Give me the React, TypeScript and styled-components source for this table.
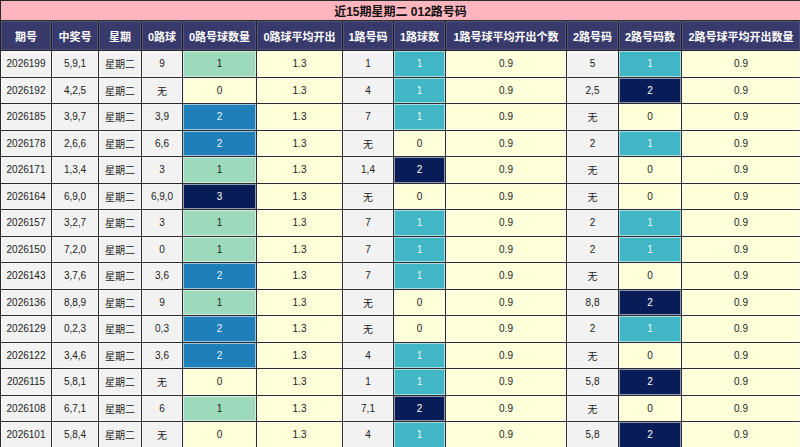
import React from "react";
import styled, { createGlobalStyle } from "styled-components";

const Global = createGlobalStyle`
  html, body { margin: 0; padding: 0; background: #ffffff; }
  body { font-family: "Liberation Sans", "Noto Sans CJK SC", Arial, sans-serif; }
`;

const Table = styled.table`
  width: 800px;
  border-collapse: collapse;
  table-layout: fixed;
  font-family: "Liberation Sans", "Noto Sans CJK SC", Arial, sans-serif;
`;

const TitleCell = styled.th`
  height: 20px;
  padding: 0;
  background: #ffb5bd;
  border: 1px solid #2b2b2b;
  color: #111;
  font-size: 12px;
  font-weight: bold;
  text-align: center;
  box-sizing: border-box;
`;

const HeadCell = styled.th`
  height: 29px;
  padding: 0;
  background: #393a6c;
  color: #ffffff;
  font-size: 11px;
  font-weight: bold;
  text-align: center;
  border: 1px solid #222;
  box-shadow: inset 0 0 0 1px rgba(255, 255, 255, 0.12);
  white-space: nowrap;
  overflow: hidden;
`;

const Row = styled.tr`
  height: 26.53px;
`;

type Tone = "gray" | "yellow" | "mint" | "blue" | "navy" | "teal";

const toneBg: Record<Tone, string> = {
  gray: "#f2f2f2",
  yellow: "#ffffda",
  mint: "#9dd9bb",
  blue: "#1f7fb8",
  navy: "#081d58",
  teal: "#41b6c4",
};

const toneFg: Record<Tone, string> = {
  gray: "#222",
  yellow: "#222",
  mint: "#222",
  blue: "#e6f2f8",
  navy: "#ffffff",
  teal: "#e9f6f8",
};

const Cell = styled.td<{ $tone: Tone }>`
  padding: 0;
  text-align: center;
  font-size: 10px;
  background: ${(p) => toneBg[p.$tone]};
  color: ${(p) => toneFg[p.$tone]};
  border: 1px solid #2b2b2b;
  box-shadow: inset 0 0 0 1px rgba(255, 255, 255, 0.55);
  white-space: nowrap;
  overflow: hidden;
`;

const widths = [51, 47, 43, 41, 74, 86, 51, 52, 121, 52, 63, 119];

const headers = [
  "期号",
  "中奖号",
  "星期",
  "0路球",
  "0路号球数量",
  "0路球平均开出",
  "1路号码",
  "1路球数",
  "1路号球平均开出个数",
  "2路号码",
  "2路号码数",
  "2路号球平均开出数量",
];

type RowData = [string, string, string, number, string, number, string, number];

const rows: RowData[] = [
  ["2026199", "5,9,1", "9", 1, "1", 1, "5", 1],
  ["2026192", "4,2,5", "无", 0, "4", 1, "2,5", 2],
  ["2026185", "3,9,7", "3,9", 2, "7", 1, "无", 0],
  ["2026178", "2,6,6", "6,6", 2, "无", 0, "2", 1],
  ["2026171", "1,3,4", "3", 1, "1,4", 2, "无", 0],
  ["2026164", "6,9,0", "6,9,0", 3, "无", 0, "无", 0],
  ["2026157", "3,2,7", "3", 1, "7", 1, "2", 1],
  ["2026150", "7,2,0", "0", 1, "7", 1, "2", 1],
  ["2026143", "3,7,6", "3,6", 2, "7", 1, "无", 0],
  ["2026136", "8,8,9", "9", 1, "无", 0, "8,8", 2],
  ["2026129", "0,2,3", "0,3", 2, "无", 0, "2", 1],
  ["2026122", "3,4,6", "3,6", 2, "4", 1, "无", 0],
  ["2026115", "5,8,1", "无", 0, "1", 1, "5,8", 2],
  ["2026108", "6,7,1", "6", 1, "7,1", 2, "无", 0],
  ["2026101", "5,8,4", "无", 0, "4", 1, "5,8", 2],
];

const zeroTone = (n: number): Tone => (["yellow", "mint", "blue", "navy"] as Tone[])[n];
const pairTone = (n: number): Tone => (["yellow", "teal", "navy"] as Tone[])[n];

export default function App() {
  return (
    <>
      <Global />
      <Table>
        <colgroup>
          {widths.map((w, i) => (
            <col key={i} style={{ width: w }} />
          ))}
        </colgroup>
        <thead>
          <tr>
            <TitleCell colSpan={12}>近15期星期二 012路号码</TitleCell>
          </tr>
          <tr>
            {headers.map((h) => (
              <HeadCell key={h}>{h}</HeadCell>
            ))}
          </tr>
        </thead>
        <tbody>
          {rows.map((r) => (
            <Row key={r[0]}>
              <Cell $tone="gray">{r[0]}</Cell>
              <Cell $tone="gray">{r[1]}</Cell>
              <Cell $tone="gray">星期二</Cell>
              <Cell $tone="gray">{r[2]}</Cell>
              <Cell $tone={zeroTone(r[3])}>{r[3]}</Cell>
              <Cell $tone="yellow">1.3</Cell>
              <Cell $tone="gray">{r[4]}</Cell>
              <Cell $tone={pairTone(r[5])}>{r[5]}</Cell>
              <Cell $tone="yellow">0.9</Cell>
              <Cell $tone="gray">{r[6]}</Cell>
              <Cell $tone={pairTone(r[7])}>{r[7]}</Cell>
              <Cell $tone="yellow">0.9</Cell>
            </Row>
          ))}
        </tbody>
      </Table>
    </>
  );
}
